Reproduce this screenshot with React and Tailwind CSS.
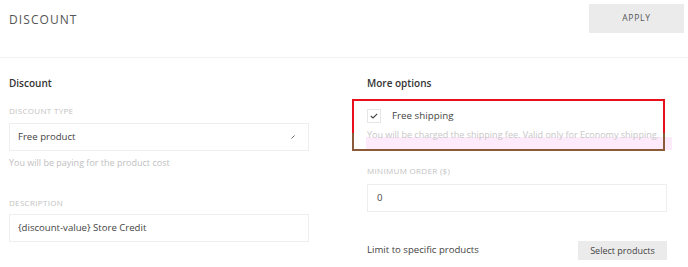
import { useState } from "react";

const font = { fontFamily: '"Open Sans", "Liberation Sans", sans-serif' };

const Label = ({ children, className = "" }) => (
    <div className={`h-[12px] leading-[12px] text-[8px] uppercase tracking-[0.04em] text-[#c2c2c2] ${className}`}>
        {children}
    </div>
);

const App = () => {
    const [freeShipping, setFreeShipping] = useState(true);

    return (
        <div style={font} className="w-[688px] h-[267px] overflow-hidden bg-white text-[#555]">
            {/* Header */}
            <div className="h-[58px] border-b border-[#f1f1f1] flex justify-between pl-[9px] pr-[4px]">
                <h1 className="mt-[12px] h-[16px] leading-[16px] text-[12px] tracking-[0.09em] text-[#555]">DISCOUNT</h1>
                <button className="mt-[4px] w-[95px] h-[29px] bg-[#ebebeb] text-[8.5px] tracking-[0.09em] text-[#555]">
                    APPLY
                </button>
            </div>

            <div className="flex pl-[9px] gap-[58px]">
                {/* Left column */}
                <div className="w-[300px] flex flex-col">
                    <h2 className="mt-[18px] h-[14px] leading-[14px] text-[10px] font-semibold text-[#333]">Discount</h2>
                    <Label className="mt-[15px]">Discount type</Label>
                    <div className="mt-[6px] h-[28px] border border-[#eee] flex items-center justify-between pl-[8px] pr-[13px] text-[9.6px] text-[#444]">
                        <span>Free product</span>
                        <svg width="4" height="4" viewBox="0 0 4 4">
                            <path d="M0.5 3.5 L3.5 0.5" stroke="#666" strokeWidth="1" />
                        </svg>
                    </div>
                    <div className="mt-[6px] h-[12px] leading-[12px] text-[9px] text-[#c0c0c0]">You will be paying for the product cost</div>
                    <Label className="mt-[28px]">Description</Label>
                    <div className="mt-[5px] h-[28px] border border-[#eee] flex items-center pl-[8px] text-[9.6px] text-[#444]">
                        {"{discount-value} Store Credit"}
                    </div>
                </div>

                {/* Right column */}
                <div className="w-[300px] flex flex-col">
                    <h2 className="mt-[18px] h-[14px] leading-[14px] text-[10px] font-semibold text-[#333]">More options</h2>
                    <div className="relative mt-[9px] -ml-[15px] w-[313px] h-[52px] border-2 border-[#e8101a] pl-[13px] pt-[8px]">
                        <div className="absolute left-[12px] right-[-9px] top-[36px] h-[13px] bg-[#fdeafa]" />
                        <div className="absolute -left-[2px] -bottom-[2px] w-[2px] h-[18px] bg-[#8a5a3a]" />
                        <div className="absolute -right-[2px] -bottom-[2px] w-[2px] h-[18px] bg-[#8a5a3a]" />
                        <div className="absolute -left-[2px] -right-[2px] -bottom-[2px] h-[2px] bg-[#8a5a3a]" />
                        <label className="relative flex items-center gap-[11px] h-[14px] cursor-pointer">
                            <span
                                onClick={() => setFreeShipping(!freeShipping)}
                                className="w-[14px] h-[14px] border border-[#e6e6e6] flex items-center justify-center bg-white"
                            >
                                {freeShipping && (
                                    <svg width="8" height="6" viewBox="0 0 8 6" fill="none">
                                        <path d="M0.8 3 L3 5 L7.2 0.8" stroke="#444" strokeWidth="1.1" />
                                    </svg>
                                )}
                            </span>
                            <span className="text-[9.8px] text-[#444]">Free shipping</span>
                        </label>
                        <div className="relative mt-[6px] h-[12px] leading-[12px] text-[9px] text-[#c8c8c8] whitespace-nowrap">
                            You will be charged the shipping fee. Valid only for Economy shipping.
                        </div>
                    </div>
                    <Label className="mt-[14px]">Minimum order ($)</Label>
                    <div className="mt-[7px] h-[28px] border border-[#eee] flex items-center pl-[9px] text-[9.6px] text-[#444]">
                        0
                    </div>
                    <div className="mt-[29px] flex items-center justify-between">
                        <span className="text-[9.6px] text-[#444]">Limit to specific products</span>
                        <button className="w-[89px] h-[19px] bg-[#ebebeb] text-[9px] text-[#444]">Select products</button>
                    </div>
                </div>
            </div>
        </div>
    );
};

export default App;
